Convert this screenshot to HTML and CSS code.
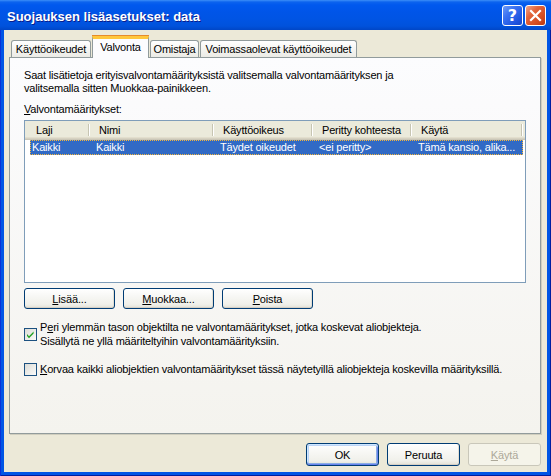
FILE: index.html
```html
<!DOCTYPE html>
<html lang="fi">
<head>
<meta charset="utf-8">
<title>Suojauksen lisäasetukset: data</title>
<link rel="stylesheet" href="styles.css">
</head>
<body>
<div class="window">
  <div class="titlebar">
    <span class="title">Suojauksen lisäasetukset: data</span>
    <div class="cap-btns">
      <span class="cap-btn help">?</span>
      <span class="cap-btn close">
        <svg width="13" height="13" viewBox="0 0 13 13"><path d="M2 2 L11 11 M11 2 L2 11" stroke="#fff" stroke-width="2.2" stroke-linecap="square"/></svg>
      </span>
    </div>
  </div>
  <div class="client">
    <div class="tabs">
      <div class="tab t1">Käyttöoikeudet</div>
      <div class="tab active t2">Valvonta</div>
      <div class="tab t3">Omistaja</div>
      <div class="tab t4">Voimassaolevat käyttöoikeudet</div>
    </div>
    <div class="panel">
      <p class="intro">Saat lisätietoja erityisvalvontamäärityksistä valitsemalla valvontamäärityksen ja<br>valitsemalla sitten Muokkaa-painikkeen.</p>
      <div class="label"><u>V</u>alvontamääritykset:</div>
      <div class="listview">
        <div class="lv-header">
          <div class="hc c1">Laji</div>
          <div class="hc c2">Nimi</div>
          <div class="hc c3">Käyttöoikeus</div>
          <div class="hc c4">Peritty kohteesta</div>
          <div class="hc c5">Käytä</div>
        </div>
        <div class="lv-row selected">
          <div class="rc c1">Kaikki</div>
          <div class="rc c2">Kaikki</div>
          <div class="rc c3">Täydet oikeudet</div>
          <div class="rc c4">&lt;ei peritty&gt;</div>
          <div class="rc c5">Tämä kansio, alika...</div>
        </div>
      </div>
      <div class="btn-row">
        <button class="btn wide"><u>L</u>isää...</button>
        <button class="btn wide"><u>M</u>uokkaa...</button>
        <button class="btn wide"><u>P</u>oista</button>
      </div>
      <div class="check first">
        <span class="box checked">
          <svg width="11" height="11" viewBox="0 0 11 11"><path d="M2 5 L4 7.2 L8.6 2.6 L8.6 4.6 L4 9.2 L2 7 Z" fill="#21a121"/></svg>
        </span>
        <span class="check-text">P<u>e</u>ri ylemmän tason objektilta ne valvontamääritykset, jotka koskevat aliobjekteja.<br>Sisällytä ne yllä määriteltyihin valvontamäärityksiin.</span>
      </div>
      <div class="check second">
        <span class="box"></span>
        <span class="check-text"><u>K</u>orvaa kaikki aliobjektien valvontamääritykset tässä näytetyillä aliobjekteja koskevilla määrityksillä.</span>
      </div>
    </div>
    <div class="dialog-buttons">
      <button class="btn default">OK</button>
      <button class="btn">Peruuta</button>
      <button class="btn disabled"><u>K</u>äytä</button>
    </div>
  </div>
</div>
</body>
</html>
```
FILE: styles.css
```css
* { box-sizing: border-box; }
html, body { margin: 0; padding: 0; }
body {
  width: 551px;
  height: 476px;
  overflow: hidden;
  background: #fff;
  font-family: "Liberation Sans", Arial, sans-serif;
  font-size: 11px;
  letter-spacing: -0.18px;
  color: #000;
}
u { text-decoration: underline; text-underline-offset: 1px; }

.window {
  width: 551px;
  height: 476px;
  display: flex;
  flex-direction: column;
  background: #0055e5;
  box-shadow: inset 1px 0 #0831d9, inset -1px 0 #001ea0, inset 0 -1px #001ea0;
}

.titlebar {
  height: 30px;
  flex: none;
  display: flex;
  align-items: center;
  padding: 0 5px 0 7px;
  background: linear-gradient(to bottom, #3c8ef8 0, #0c63ee 2px, #0058ee 5px, #0055e8 12px, #0054e3 20px, #0052dc 26px, #0046c6 30px);
}
.title {
  flex: 1;
  color: #fff;
  font-family: "Liberation Sans", Arial, sans-serif;
  font-weight: bold;
  font-size: 13px;
  letter-spacing: 0;
  padding-top: 2px;
  text-shadow: 1px 1px #0a1d8c;
}
.cap-btns { display: flex; gap: 2px; margin-top: 1px; }
.cap-btn {
  width: 21px;
  height: 21px;
  border: 1px solid #fff;
  border-radius: 3px;
  display: flex;
  align-items: center;
  justify-content: center;
}
.help {
  background: linear-gradient(135deg, #6f9cf8 0%, #3a72f2 35%, #1f55e0 75%, #1746c8 100%);
  color: #fff;
  font-family: "DejaVu Sans", sans-serif;
  font-weight: bold;
  font-size: 16px;
  letter-spacing: 0;
}
.close {
  background: linear-gradient(135deg, #f0a68c 0%, #e2643b 35%, #d24a1e 75%, #b8360f 100%);
}

.client {
  flex: 1;
  margin: 0 4px 4px;
  background: #ece9d8;
  display: flex;
  flex-direction: column;
  padding: 6px 6px 6px 5px;
}

.tabs {
  display: flex;
  align-items: flex-end;
  padding-left: 2px;
  height: 22px;
  margin-bottom: -1px;
  position: relative;
  z-index: 1;
}
.tab {
  height: 17px;
  margin-bottom: 1px;
  border: 1px solid #919b9c;
  border-bottom: none;
  border-radius: 3px 3px 0 0;
  background: linear-gradient(#ffffff, #f3f3ef 60%, #ecebe6);
  text-align: center;
  line-height: 16px;
  margin-right: 1px;
}
.tab.active {
  height: 22px;
  margin-bottom: 0;
  border-top: 3px solid #ffc73c;
  box-shadow: 0 -1px #e68b2c;
  background: #fcfcfe;
  line-height: 16px;
  border-radius: 0;
}
.t1 { width: 80px; }
.t2 { width: 57px; }
.t3 { width: 49px; }
.t4 { width: 157px; }

.panel {
  flex: 1;
  border: 1px solid #919b9c;
  background: linear-gradient(#fcfcfe, #f4f3ee);
  padding: 11px 14px 0;
  box-shadow: 1px 1px #d0cebf;
}
.intro { margin: 0; line-height: 13px; }
.label { margin-top: 8px; line-height: 13px; }

.listview {
  margin-top: 4px;
  height: 163px;
  border: 1px solid #7f9db9;
  background: #fff;
}
.lv-header {
  display: flex;
  height: 19px;
  background: #ebeadb;
  box-shadow: inset 0 -1px #cbc7b8, inset 0 -2px #d6d2c2, inset 0 -3px #e2decd;
}
.hc {
  position: relative;
  line-height: 18px;
  padding-left: 10px;
  white-space: nowrap;
}
.hc::after {
  content: "";
  position: absolute;
  right: 0;
  top: 3px;
  bottom: 4px;
  width: 1px;
  background: #c7c5b2;
  box-shadow: 1px 0 #fff;
}
.hc.c1 { width: 64px; padding-left: 11px; }
.c2 { width: 124px; }
.c3 { width: 99px; }
.c4 { width: 99px; }
.c5 { width: 111px; }

.lv-row {
  display: flex;
  margin: 0 0 0 5px;
  height: 15px;
  width: 493px;
}
.lv-row.selected {
  background: #316ac5;
  color: #fff;
  outline: 1px dotted #f4b63c;
  outline-offset: -1px;
}
.rc {
  line-height: 15px;
  padding-left: 7px;
  white-space: nowrap;
  overflow: hidden;
}
.rc.c1 { width: 59px; padding-left: 2px; }

.btn {
  font-family: inherit;
  font-size: 11px;
  letter-spacing: -0.15px;
  color: #000;
  width: 73px;
  height: 23px;
  padding: 0;
  border: 1px solid #003c74;
  border-radius: 3px;
  background: linear-gradient(#ffffff, #f7f7f4 40%, #f0f0ea 80%, #e3e1d6);
  box-shadow: inset 0 -1px #d6d0c5, inset -1px 0 #e2ded3;
  display: flex;
  align-items: center;
  justify-content: center;
}
.btn.default {
  box-shadow: inset 0 1px #cee7ff, inset 0 2px #bcd4f6, inset 0 -1px #6982ee, inset 0 -2px #89ade4, inset 1px 0 #cee7ff, inset 2px 0 #bcd4f6, inset -1px 0 #6982ee, inset -2px 0 #89ade4;
}
.btn.disabled {
  border-color: #c9c7ba;
  background: #f5f4ea;
  color: #aca899;
  box-shadow: none;
}
.btn-row {
  display: flex;
  gap: 8px;
  margin-top: 5px;
}
.btn.wide { width: 91px; height: 21px; }

.check {
  display: flex;
  align-items: center;
  gap: 3px;
  line-height: 14px;
}
.check.first { margin-top: 11px; }
.check.second { margin-top: 14px; }
.box {
  flex: none;
  width: 13px;
  height: 13px;
  border: 1px solid #1c5180;
  background: linear-gradient(135deg, #dcdcd7, #fbfbf9);
  display: flex;
  align-items: center;
  justify-content: center;
}

.dialog-buttons {
  display: flex;
  justify-content: flex-end;
  gap: 8px;
  margin-top: 9px;
  flex: none;
}
```
